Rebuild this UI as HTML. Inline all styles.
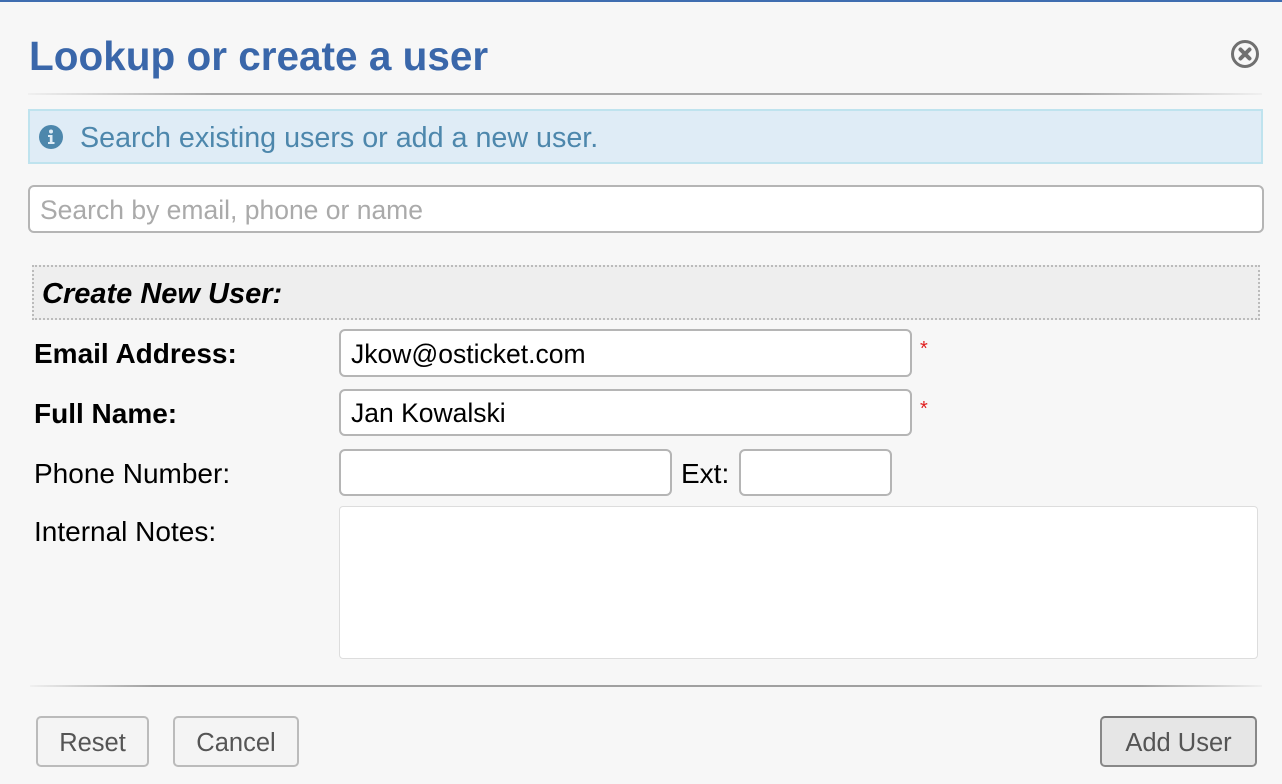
<!DOCTYPE html>
<html><head><style>
*{box-sizing:border-box;margin:0;padding:0}
body{width:1282px;height:784px;background:#f7f7f7;font-family:"Liberation Sans",sans-serif;position:relative;overflow:hidden}
.a{position:absolute;white-space:nowrap}
.inp{position:absolute;background:#fff;border:2px solid #b5b5b5;border-radius:6px;font-size:26.5px;padding-left:10px;padding-top:2px;display:flex;align-items:center;color:#000;white-space:nowrap}
.lbl{position:absolute;left:34px;font-size:28px;color:#000;white-space:nowrap}
.btn{position:absolute;top:716px;height:51px;border:2px solid #bbb;border-radius:5px;background:#f4f4f4;color:#555;font-size:25.5px;display:flex;align-items:center;justify-content:center;padding-top:3px}
.star{position:absolute;left:920px;color:#e02020;font-size:20px}
</style></head><body>
<div class="a" style="left:0;top:0;width:1282px;height:2px;background:#3f6db0"></div>
<div class="a" style="left:29px;top:33px;font-size:40.5px;font-weight:bold;color:#3a67aa">Lookup or create a user</div>
<svg class="a" style="left:1230px;top:39px" width="30" height="30" viewBox="0 0 30 30"><circle cx="15" cy="15" r="12.5" fill="none" stroke="#707070" stroke-width="3"/><path d="M10.5 10.5L19.5 19.5M19.5 10.5L10.5 19.5" stroke="#707070" stroke-width="4" stroke-linecap="round"/></svg>
<div class="a" style="left:28px;top:93px;width:1234px;height:2px;background:linear-gradient(to right,#f0f0f0,#a8a8a8 15%,#a8a8a8 85%,#f0f0f0)"></div>
<div class="a" style="left:28px;top:109px;width:1235px;height:55px;background:#dfecf6;border:2px solid #bfe3ee"></div>
<svg class="a" style="left:38px;top:124px" width="26" height="26" viewBox="0 0 26 26"><circle cx="13" cy="13" r="12" fill="#4d87ac"/><circle cx="13" cy="7.5" r="2" fill="#dfecf6"/><path d="M10 11h4.5v7h2v2h-6.5v-2h1.8v-5h-1.8z" fill="#dfecf6"/></svg>
<div class="a" style="left:80px;top:122px;font-size:28.7px;color:#4d87ac">Search existing users or add a new user.</div>
<div class="inp" style="left:28px;top:185px;width:1236px;height:48px;color:#aaa">Search by email, phone or name</div>
<div class="a" style="left:32px;top:265px;width:1228px;height:55px;background:#eee;border:2px dotted #bbb"></div>
<div class="a" style="left:42px;top:278px;font-size:29px;font-weight:bold;font-style:italic">Create New User:</div>
<div class="lbl" style="top:338px;font-weight:bold">Email Address:</div>
<div class="inp" style="left:339px;top:329px;width:573px;height:48px">Jkow@osticket.com</div>
<div class="star" style="top:338px">*</div>
<div class="lbl" style="top:398px;font-weight:bold">Full Name:</div>
<div class="inp" style="left:339px;top:389px;width:573px;height:47px">Jan Kowalski</div>
<div class="star" style="top:398px">*</div>
<div class="lbl" style="top:458px">Phone Number:</div>
<div class="inp" style="left:339px;top:449px;width:333px;height:47px"></div>
<div class="a" style="left:681px;top:458px;font-size:28px">Ext:</div>
<div class="inp" style="left:739px;top:449px;width:153px;height:47px"></div>
<div class="lbl" style="top:516px">Internal Notes:</div>
<div class="a" style="left:339px;top:506px;width:919px;height:153px;background:#fff;border:1px solid #ddd;border-radius:4px"></div>
<div class="a" style="left:30px;top:685px;width:1232px;height:2px;background:linear-gradient(to right,#f0f0f0,#a0a0a0 10%,#a0a0a0 90%,#f0f0f0)"></div>
<div class="btn" style="left:36px;width:113px">Reset</div>
<div class="btn" style="left:173px;width:126px">Cancel</div>
<div class="btn" style="left:1100px;width:157px;background:#e6e6e6;border-color:#888;border-top-color:#777">Add User</div>
</body></html>
